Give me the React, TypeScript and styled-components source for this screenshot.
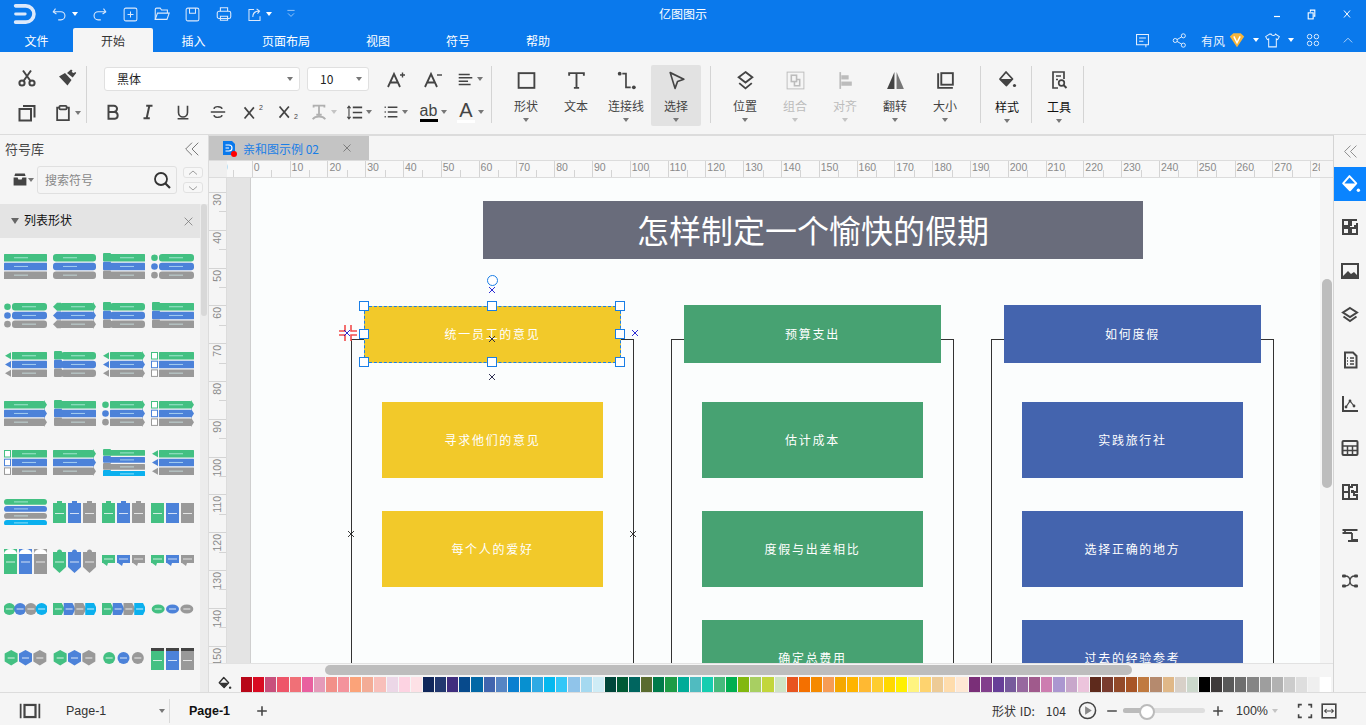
import React from 'react';
import styled, { createGlobalStyle } from 'styled-components';

const FONT = `"Noto Sans CJK SC", "Liberation Sans", sans-serif`;
const BLUE = '#0a79ec';

const GlobalStyle = createGlobalStyle`
  html, body {
    margin: 0;
    padding: 0;
    overflow: hidden;
    background: #f5f5f5;
  }
  * {
    box-sizing: border-box;
  }
`;

const Shell = styled.div`
  width: 1366px;
  height: 725px;
  display: flex;
  flex-direction: column;
  overflow: hidden;
  font-family: ${FONT};
  font-size: 12px;
  color: #333;
`;

/* ---------- icons ---------- */

type SvgProps = { $size?: number; $box?: number };

const Svg = styled.svg.attrs<SvgProps>((p) => ({
  viewBox: `0 0 ${p.$box ?? 20} ${p.$box ?? 20}`,
  fill: p.fill ?? 'none',
  stroke: p.stroke ?? 'currentColor',
  strokeWidth: p.strokeWidth ?? 1.6,
}))<SvgProps>`
  width: ${(p) => p.$size ?? 20}px;
  height: ${(p) => p.$size ?? 20}px;
  flex: none;
  display: block;
`;

const Caret = styled.i<{ $light?: boolean; $dim?: boolean }>`
  display: block;
  flex: none;
  width: 0;
  height: 0;
  margin-left: 3px;
  border-left: 3.5px solid transparent;
  border-right: 3.5px solid transparent;
  border-top: 4px solid ${(p) => (p.$light ? '#fff' : p.$dim ? '#c4c4c4' : '#777')};
`;

const Logo = () => (
  <Svg $size={24} strokeWidth={3} strokeLinecap="round">
    <path d="M3 3.2h8.5a6.8 6.8 0 0 1 0 13.6H3" />
    <path d="M3 10h8" strokeWidth={2.4} />
  </Svg>
);

/* ---------- title bar ---------- */

const TitleBar = styled.div`
  height: 28px;
  flex: none;
  background: ${BLUE};
  color: #fff;
  display: flex;
  align-items: center;
  position: relative;
`;

const QuickSlot = styled.div<{ $w: number; $lead?: number }>`
  width: ${(p) => p.$w}px;
  height: 28px;
  padding-left: ${(p) => p.$lead ?? 0}px;
  display: flex;
  align-items: center;
  justify-content: center;
  flex: none;
  color: #dce9fb;
`;

const AppName = styled.div`
  position: absolute;
  left: 0;
  right: 0;
  text-align: center;
  font-size: 12px;
  top: 5px;
  pointer-events: none;
`;

const WindowButtons = styled.div`
  margin-left: auto;
  display: flex;
  padding-right: 2px;
`;

const WindowButton = styled.div`
  width: 35px;
  height: 28px;
  display: flex;
  align-items: center;
  justify-content: center;
  color: #fff;
`;

/* ---------- menu tabs ---------- */

const MenuBar = styled.div`
  height: 24px;
  flex: none;
  background: ${BLUE};
  display: flex;
  align-items: flex-end;
  color: #fff;
`;

const MenuTab = styled.div<{ $w: number; $active?: boolean }>`
  width: ${(p) => p.$w}px;
  height: 24px;
  display: flex;
  align-items: center;
  justify-content: center;
  font-size: 12px;
  flex: none;
  background: ${(p) => (p.$active ? '#f5f5f5' : 'transparent')};
  color: ${(p) => (p.$active ? '#333' : '#fff')};
  border-radius: 2px 2px 0 0;
`;

const MenuTools = styled.div`
  margin-left: auto;
  display: flex;
  align-items: center;
  height: 24px;
`;

const MenuTool = styled.div<{ $w: number }>`
  width: ${(p) => p.$w}px;
  display: flex;
  align-items: center;
  justify-content: center;
  flex: none;
  color: #e8f1fd;
`;

/* ---------- ribbon ---------- */

const Ribbon = styled.div`
  height: 83px;
  flex: none;
  background: #f5f5f5;
  border-bottom: 1px solid #dcdcdc;
  display: flex;
  align-items: flex-start;
  color: #444;
`;

const RibbonDivider = styled.div`
  width: 1px;
  height: 57px;
  margin-top: 14px;
  background: #d4d4d4;
  flex: none;
`;

const ClipGroup = styled.div`
  width: 86px;
  padding: 8px 0 0 7px;
  display: grid;
  grid-template-columns: 40px 40px;
  grid-auto-rows: 35px;
  flex: none;
`;

const RibbonCell = styled.div<{ $w?: number; $gap?: number; $dim?: boolean }>`
  width: ${(p) => (p.$w ? `${p.$w}px` : 'auto')};
  margin-left: ${(p) => p.$gap ?? 0}px;
  height: 100%;
  display: flex;
  align-items: center;
  justify-content: center;
  flex: none;
  color: ${(p) => (p.$dim ? '#b0b0b0' : 'inherit')};
`;

const FontGroup = styled.div`
  width: 404px;
  padding: 15px 0 0 8px;
  flex: none;
  display: flex;
  flex-direction: column;
  gap: 9px;
`;

const FontRow = styled.div<{ $indent?: number }>`
  height: 24px;
  display: flex;
  align-items: center;
  padding-left: ${(p) => p.$indent ?? 0}px;
`;

const Picker = styled.div<{ $w: number; $gap?: number }>`
  width: ${(p) => p.$w}px;
  margin-left: ${(p) => p.$gap ?? 0}px;
  height: 24px;
  background: #fff;
  border: 1px solid #e0e0e0;
  border-radius: 3px;
  display: flex;
  align-items: center;
  justify-content: space-between;
  padding: 0 6px 2px 12px;
  font-size: 12px;
  color: #222;
  flex: none;
  & > i {
    margin-top: 2px;
  }
`;

const BigGroup = styled.div<{ $pad: number; $w: number }>`
  width: ${(p) => p.$w}px;
  padding: 13px 0 0 ${(p) => p.$pad}px;
  display: flex;
  flex: none;
`;

const BigButton = styled.div<{ $active?: boolean; $off?: boolean; $w?: number; $dark?: boolean }>`
  width: ${(p) => p.$w ?? 50}px;
  height: 61px;
  flex: none;
  display: flex;
  flex-direction: column;
  align-items: center;
  background: ${(p) => (p.$active ? '#e2e2e2' : 'transparent')};
  border-radius: 2px;
  color: ${(p) => (p.$off ? '#bcbcbc' : p.$dark ? '#111' : '#444')};
`;

const BigIcon = styled.div<{ $raised?: boolean }>`
  height: 29px;
  margin-top: ${(p) => (p.$raised ? 0 : 1)}px;
  display: flex;
  align-items: center;
  justify-content: center;
  color: ${(p) => (p.$raised ? '#444' : 'inherit')};
`;

const BigLabel = styled.div<{ $low?: boolean }>`
  height: 18px;
  line-height: 18px;
  margin-top: ${(p) => (p.$low ? 4 : 2)}px;
  font-size: 12px;
  white-space: nowrap;
`;

const BigCaret = styled.div`
  margin-top: 3px;
  & > i {
    margin-left: 0;
  }
`;

const SuperScript = styled.span<{ $down?: boolean }>`
  font-family: "Liberation Sans", sans-serif;
  display: flex;
  align-items: ${(p) => (p.$down ? 'flex-end' : 'flex-start')};
  font-size: 16px;
  line-height: 18px;
  color: #444;
  & small {
    font-size: 7px;
    line-height: 8px;
  }
`;

const LetterIcon = styled.span<{ $bar: string; $big?: boolean }>`
  font-family: "Liberation Sans", sans-serif;
  display: flex;
  flex-direction: column;
  align-items: center;
  width: 18px;
  font-size: ${(p) => (p.$big ? 20 : 16)}px;
  line-height: ${(p) => (p.$big ? 17 : 15)}px;
  color: #444;
  &::after {
    content: '';
    width: 18px;
    height: 3px;
    margin-top: 1px;
    background: ${(p) => p.$bar};
  }
`;

/* ---------- main body ---------- */

const Body = styled.div`
  flex: 1;
  min-height: 0;
  display: flex;
`;

const LeftPanel = styled.aside`
  width: 209px;
  flex: none;
  background: #f5f5f5;
  border-right: 1px solid #dcdcdc;
  display: flex;
  flex-direction: column;
  overflow: hidden;
`;

const PanelTitle = styled.div`
  height: 29px;
  flex: none;
  display: flex;
  align-items: center;
  justify-content: space-between;
  padding: 0 7px 2px 5px;
  font-size: 13px;
  color: #444;
`;

const CollapseIcon = styled.span`
  color: #777;
  display: flex;
`;

const SearchRow = styled.div`
  height: 40px;
  flex: none;
  display: flex;
  padding: 2px 0 0 12px;
  align-items: flex-start;
`;

const TrayButton = styled.div`
  width: 25px;
  height: 28px;
  display: flex;
  align-items: center;
  color: #444;
  & > i {
    margin-left: 0;
  }
`;

const SearchBox = styled.div`
  width: 140px;
  height: 28px;
  background: #f5f5f5;
  border: 1px solid #e0e0e0;
  border-radius: 3px;
  display: flex;
  align-items: center;
  justify-content: space-between;
  padding: 0 4px 2px 7px;
  color: #888;
  font-size: 12px;
  & > svg {
    color: #333;
    margin-top: 2px;
  }
`;

const StepColumn = styled.div`
  margin-left: 6px;
  display: flex;
  flex-direction: column;
  gap: 4px;
  padding-top: 1px;
`;

const StepButton = styled.div`
  width: 20px;
  height: 11px;
  background: #f7f7f7;
  border: 1px solid #e2e2e2;
  border-radius: 3px;
  display: flex;
  align-items: center;
  justify-content: center;
  color: #777;
`;

const LibraryBody = styled.div`
  flex: 1;
  min-height: 0;
  display: flex;
`;

const LibraryColumn = styled.div`
  width: 200px;
  flex: none;
  display: flex;
  flex-direction: column;
`;

const LibraryHeader = styled.div`
  height: 34px;
  flex: none;
  background: #e4e4e4;
  display: flex;
  align-items: center;
  padding: 0 6px 3px 11px;
  color: #111;
  font-size: 12px;
  & > span {
    margin-left: 5px;
    flex: 1;
  }
  & > svg {
    color: #777;
    margin-top: 3px;
  }
  & > i {
    margin-top: 3px;
  }
`;

const LibTriangle = styled.i`
  width: 0;
  height: 0;
  border-left: 4.5px solid transparent;
  border-right: 4.5px solid transparent;
  border-top: 6px solid #666;
`;

const ThumbGrid = styled.div`
  padding: 14px 0 0 4px;
  display: grid;
  grid-template-columns: repeat(4, 43px);
  grid-auto-rows: 28px;
  column-gap: 6px;
  row-gap: 21px;
`;

const LibraryScroll = styled.div`
  width: 8px;
  flex: none;
  background: #ececec;
  padding: 0 1px;
  &::before {
    content: '';
    display: block;
    width: 6px;
    height: 112px;
    background: #d8d8d8;
    border-radius: 3px;
  }
`;

const CenterColumn = styled.main`
  width: 1124px;
  flex: none;
  display: flex;
  flex-direction: column;
  min-width: 0;
`;

const DocTabs = styled.div`
  height: 26px;
  flex: none;
  background: #f5f5f5;
  border-top: 1px solid #dcdcdc;
  border-bottom: 1px solid #dcdcdc;
  display: flex;
`;

const DocTab = styled.div`
  width: 160px;
  height: 24px;
  background: #c4c4c4;
  display: flex;
  align-items: center;
  padding-left: 13px;
  color: #1a7ee6;
  font-size: 12px;
  position: relative;
`;

const DocTabName = styled.span`
  margin-left: 7px;
  width: 99px;
  white-space: nowrap;
`;

const DocTabClose = styled.span`
  color: #666;
  display: flex;
`;

const RedDot = styled.i`
  position: absolute;
  left: 22px;
  top: 15px;
  width: 6px;
  height: 6px;
  border-radius: 50%;
  background: #f00;
`;

const RulerRow = styled.div`
  height: 17px;
  flex: none;
  display: flex;
  background: #f5f5f5;
  border-bottom: 1px solid #dcdcdc;
`;

const RulerCorner = styled.div`
  width: 18px;
  flex: none;
  background: #efefef;
`;

const HStrip = styled.div`
  width: 1093px;
  flex: none;
  overflow: hidden;
  display: flex;
  background: #f8f8f8;
`;

const HTick = styled.div<{ $first?: boolean }>`
  width: 37.8px;
  flex: none;
  margin-left: ${(p) => (p.$first ? -13 : 0)}px;
  height: 16px;
  border-left: 1px solid #d4d4d4;
  position: relative;
  padding-left: 1px;
  font: 10.5px/13px "Liberation Sans", sans-serif;
  color: #8a8a8a;
  &::after {
    content: '';
    position: absolute;
    left: 18.4px;
    bottom: 0;
    height: 7px;
    width: 1px;
    background: #d4d4d4;
  }
`;

const CanvasRow = styled.div`
  height: 485px;
  flex: none;
  display: flex;
`;

const VRuler = styled.div`
  width: 18px;
  flex: none;
  overflow: hidden;
  background: #f5f5f5;
  border-right: 1px solid #dcdcdc;
  padding-top: 14px;
`;

const VTick = styled.div`
  height: 37.8px;
  border-top: 1px solid #d4d4d4;
  position: relative;
  font: 10.5px/13px "Liberation Sans", sans-serif;
  color: #8a8a8a;
  & > span {
    position: absolute;
    left: 2px;
    top: 1px;
    writing-mode: vertical-rl;
    transform: rotate(180deg);
  }
  &::after {
    content: '';
    position: absolute;
    right: 0;
    top: 18.4px;
    width: 7px;
    height: 1px;
    background: #d4d4d4;
  }
`;

const Viewport = styled.div`
  width: 1093px;
  flex: none;
  overflow: hidden;
  background: #e4e4e4;
  padding-left: 24px;
`;

const Page = styled.div`
  width: 1069px;
  height: 640px;
  background: #fbfdfd;
  box-shadow: -1px 0 0 #cfcfcf;
  position: relative;
`;

const VScrollTrack = styled.div`
  width: 13px;
  flex: none;
  background: #f5f5f5;
  padding: 101px 1px 0 2px;
  &::before {
    content: '';
    display: block;
    height: 209px;
    background: #bdbdbd;
    border-radius: 5px;
  }
`;

const HScrollRow = styled.div`
  height: 12px;
  flex: none;
  display: flex;
  background: #f5f5f5;
  padding-left: 116px;
  padding-right: 13px;
  border-top: 1px solid #e2e2e2;
`;

const HScrollThumb = styled.div`
  width: 807px;
  height: 10px;
  margin-top: 1px;
  background: #bdbdbd;
  border-radius: 5px;
`;

const ColorRow = styled.div`
  height: 17px;
  flex: none;
  display: flex;
  align-items: flex-start;
  background: #f5f5f5;
  padding-left: 32px;
  position: relative;
`;

const PaintSlot = styled.div`
  position: absolute;
  left: 8px;
  top: 1px;
  color: #333;
`;

const Swatch = styled.div<{ $c: string }>`
  width: 11.13px;
  margin-right: 1px;
  height: 15px;
  margin-top: 2px;
  flex: none;
  background: ${(p) => p.$c};
`;

const RightPanel = styled.aside`
  flex: 1;
  background: #f5f5f5;
  border-left: 1px solid #d4d4d4;
  display: flex;
  flex-direction: column;
  align-items: stretch;
  color: #444;
`;

const RailCollapse = styled.div`
  height: 32px;
  display: flex;
  align-items: center;
  justify-content: center;
  color: #888;
`;

const RailItem = styled.div<{ $active?: boolean }>`
  height: ${(p) => (p.$active ? 34 : 44.2)}px;
  display: flex;
  align-items: center;
  justify-content: center;
  background: ${(p) => (p.$active ? '#0a84ff' : 'transparent')};
  color: ${(p) => (p.$active ? '#fff' : '#444')};
  margin-bottom: ${(p) => (p.$active ? 4 : 0)}px;
`;

/* ---------- diagram ---------- */

const TitleNode = styled.div`
  position: absolute;
  left: 232px;
  top: 23px;
  width: 660px;
  height: 58px;
  padding-bottom: 2px;
  background: #696c7b;
  color: #fff;
  font-size: 32px;
  display: flex;
  align-items: center;
  justify-content: center;
`;

const Frame = styled.div<{ $x: number }>`
  position: absolute;
  left: ${(p) => p.$x}px;
  top: 161px;
  width: 283px;
  height: 480px;
  border: 1px solid #333;
  border-bottom: none;
`;

const Box = styled.div<{ $x: number; $y: number; $w: number; $h: number; $c: string }>`
  position: absolute;
  left: ${(p) => p.$x}px;
  top: ${(p) => p.$y}px;
  width: ${(p) => p.$w}px;
  height: ${(p) => p.$h}px;
  padding-bottom: 2px;
  background: ${(p) => p.$c};
  color: #fff;
  font-size: 12px;
  letter-spacing: 1.7px;
  display: flex;
  align-items: center;
  justify-content: center;
`;

const SelectionOutline = styled.div`
  position: absolute;
  left: 113px;
  top: 128px;
  width: 257px;
  height: 57px;
  border: 1px dashed #1a7ee6;
`;

const Handle = styled.div<{ $x: number; $y: number }>`
  position: absolute;
  left: ${(p) => p.$x - 5}px;
  top: ${(p) => p.$y - 5}px;
  width: 10px;
  height: 10px;
  background: #fff;
  border: 1px solid #1a7ee6;
`;

const RotateHandle = styled.div`
  position: absolute;
  left: 236px;
  top: 97px;
  width: 11px;
  height: 11px;
  border-radius: 50%;
  border: 1px solid #1a7ee6;
  background: #fff;
`;

const CrossMark = styled.svg.attrs({ viewBox: '0 0 8 8' })<{ $x: number; $y: number; $c: string }>`
  position: absolute;
  left: ${(p) => p.$x - 4}px;
  top: ${(p) => p.$y - 4}px;
  width: 8px;
  height: 8px;
  stroke: ${(p) => p.$c};
  stroke-width: 0.9;
  fill: none;
`;

const Snap = styled.svg.attrs({ viewBox: '0 0 18 18' })`
  position: absolute;
  left: 88px;
  top: 146px;
  width: 18px;
  height: 18px;
  fill: none;
  stroke: #f24b4b;
  stroke-width: 1.6;
`;

/* ---------- status bar ---------- */

const StatusBar = styled.footer`
  height: 33px;
  flex: none;
  background: #f5f5f5;
  border-top: 1px solid #dcdcdc;
  padding-top: 3px;
  display: flex;
  align-items: center;
  color: #333;
  font-size: 12px;
`;

const ViewToggle = styled.div`
  width: 66px;
  padding-left: 19px;
  flex: none;
  color: #444;
`;

const PagePicker = styled.div`
  width: 104px;
  height: 24px;
  flex: none;
  display: flex;
  align-items: center;
  justify-content: space-between;
  padding-right: 4px;
  border-right: 1px solid #d8d8d8;
  font-family: "Liberation Sans", sans-serif;
  font-size: 12.5px;
`;

const PageTabName = styled.div`
  margin-left: 19px;
  width: 67px;
  font: bold 12.5px "Liberation Sans", sans-serif;
  color: #111;
`;

const AddPage = styled.div`
  width: 22px;
  color: #444;
`;

const StatusRight = styled.div`
  margin-left: auto;
  display: flex;
  align-items: center;
  color: #444;
`;

const ShapeId = styled.div`
  width: 86px;
  color: #333;
  white-space: nowrap;
  word-spacing: 1px;
`;

const ZoomMinus = styled.div`
  margin-left: 9px;
  display: flex;
`;

const ZoomPlus = styled.div`
  margin-left: 2px;
  display: flex;
`;

const ZoomTrack = styled.div`
  width: 82px;
  height: 5px;
  background: #dedede;
  border-radius: 3px;
  margin: 0 5px;
  position: relative;
  &::before {
    content: '';
    position: absolute;
    left: 0;
    top: 0;
    height: 5px;
    width: 20px;
    background: #bbb;
    border-radius: 3px;
  }
  &::after {
    content: '';
    position: absolute;
    left: 16px;
    top: -4px;
    width: 12px;
    height: 12px;
    border-radius: 50%;
    background: #fff;
    border: 2px solid #bbb;
  }
`;

const ZoomValue = styled.div`
  margin-left: 12px;
  width: 42px;
  display: flex;
  align-items: center;
  justify-content: space-between;
  white-space: nowrap;
  font: 12.5px "Liberation Sans", sans-serif;
  color: #333;
`;

const StatusIcons = styled.div`
  margin-left: 19px;
  display: flex;
  gap: 8px;
  padding-right: 29px;
`;

/* ---------- symbol thumbnails ---------- */

const GREEN = '#43c082';
const MID = '#4c82d9';
const GRAY = '#999999';
const CYAN = '#0bb0ee';

type Lead = 'none' | 'circle' | 'tag' | 'diamond' | 'square' | 'arrow';
type ThumbSpec =
  | { kind: 'bars'; lead: Lead; round?: boolean; four?: boolean; tail?: boolean }
  | { kind: 'cols'; cap?: 'tag' | 'arc' | 'point' | 'dark'; tall?: boolean }
  | { kind: 'chain'; shape: 'circle' | 'chevron' | 'oval' | 'hex' | 'coin' }
  | { kind: 'speech' };

function Thumb({ spec }: { spec: ThumbSpec }) {
  if (spec.kind === 'bars') {
    const colors = spec.four ? [GREEN, MID, GRAY, CYAN] : [GREEN, MID, GRAY];
    const pitch = spec.four ? 7 : 8.7;
    const hasLead = spec.lead !== 'none';
    const left = hasLead ? 8 : 0;
    return (
      <svg viewBox="0 0 43 28" width={43} height={28}>
        {colors.map((c, i) => {
          const y = 2 + i * pitch;
          const h = pitch - 1.2;
          return (
            <g key={c}>
              <rect x={left} y={y} width={43 - left - (spec.tail ? 3 : 0)} height={h} rx={spec.round ? 3 : 0.5} fill={c} />
              {spec.tail && <path d={`M40 ${y - 1}l3 ${h / 2 + 1}l-3 ${h / 2 + 1}z`} fill={c} />}
              <rect x={left + 10} y={y + h / 2 - 0.5} width={14} height={1} fill="#dff" opacity={0.6} />
              {spec.lead === 'circle' && <circle cx={3.5} cy={y + h / 2} r={3.3} fill={c} />}
              {spec.lead === 'tag' && <rect x={1} y={y - 1} width={8} height={h + 1} rx={1} fill={c} />}
              {spec.lead === 'diamond' && <path d={`M0 ${y + h / 2}l4 -4h4v8h-4z`} fill={c} />}
              {spec.lead === 'square' && <rect x={0.5} y={y + 0.5} width={6} height={h - 1} fill="#fff" stroke={c} />}
              {spec.lead === 'arrow' && <path d={`M1 ${y + h / 2}l6 -3.5v7z`} fill={c} />}
            </g>
          );
        })}
      </svg>
    );
  }
  if (spec.kind === 'cols') {
    const top = spec.tall ? 3 : 6;
    const bottom = spec.tall ? 28 : 26;
    return (
      <svg viewBox="0 0 43 28" width={43} height={28}>
        {[GREEN, MID, GRAY].map((c, i) => {
          const x = i * 15;
          return (
            <g key={c}>
              {spec.cap === 'point' ? (
                <path d={`M${x} ${top + 3}h13v${bottom - top - 10}l-6.5 6l-6.5 -6z`} fill={c} />
              ) : (
                <rect x={x} y={top} width={13} height={bottom - top} fill={c} />
              )}
              {spec.cap === 'tag' && <rect x={x + 4} y={top - 2} width={5} height={3} fill={c} />}
              {spec.cap === 'point' && <circle cx={x + 6.5} cy={top + 3} r={2.5} fill={c} />}
              {spec.cap === 'arc' && <path d={`M${x} ${top + 5}a6.5 5 0 0 1 13 0z`} fill="#fff" />}
              {spec.cap === 'dark' && <rect x={x} y={top - 2} width={13} height={3} fill="#444" />}
              <rect x={x + 2} y={(top + bottom) / 2} width={9} height={1} fill="#fff" opacity={0.75} />
            </g>
          );
        })}
      </svg>
    );
  }
  if (spec.kind === 'speech') {
    return (
      <svg viewBox="0 0 43 28" width={43} height={28}>
        {[GREEN, MID, GRAY].map((c, i) => (
          <g key={c}>
            <rect x={i * 15} y={9} width={13} height={8} fill={c} />
            <path d={`M${i * 15 + 1} 17h5l-1 3z`} fill={c} />
            <rect x={i * 15 + 2} y={12.5} width={9} height={1} fill="#fff" opacity={0.7} />
          </g>
        ))}
      </svg>
    );
  }
  const items = spec.shape === 'circle' || spec.shape === 'chevron' ? [GREEN, MID, GRAY, CYAN] : [GREEN, MID, GRAY];
  const step = 43 / items.length;
  return (
    <svg viewBox="0 0 43 28" width={43} height={28}>
      {items.map((c, i) => {
        const x = i * step;
        const cx = x + step / 2;
        return (
          <g key={c}>
            {spec.shape === 'circle' && <circle cx={cx} cy={14} r={6} fill={c} />}
            {spec.shape === 'chevron' && <path d={`M${x} 8h${step - 2}l3 6l-3 6h-${step - 2}z`} fill={c} />}
            {spec.shape === 'oval' && <ellipse cx={cx} cy={14} rx={6.5} ry={4.5} fill={c} />}
            {spec.shape === 'hex' && <path d={`M${cx} 6l6.5 3.5v8l-6.5 4l-6.5 -4v-8z`} fill={c} />}
            {spec.shape === 'coin' && <circle cx={cx} cy={14} r={6} fill={c} />}
            <rect x={cx - 3.5} y={13.5} width={7} height={1} fill="#fff" opacity={0.8} />
          </g>
        );
      })}
    </svg>
  );
}

const THUMBS: ThumbSpec[] = [
  { kind: 'bars', lead: 'none' },
  { kind: 'bars', lead: 'none', round: true },
  { kind: 'bars', lead: 'tag' },
  { kind: 'bars', lead: 'circle', round: true },
  { kind: 'bars', lead: 'circle', round: true },
  { kind: 'bars', lead: 'diamond', tail: true },
  { kind: 'bars', lead: 'tag', round: true },
  { kind: 'bars', lead: 'tag' },
  { kind: 'bars', lead: 'arrow' },
  { kind: 'bars', lead: 'tag', round: true },
  { kind: 'bars', lead: 'arrow', tail: true },
  { kind: 'bars', lead: 'square' },
  { kind: 'bars', lead: 'none', tail: true },
  { kind: 'bars', lead: 'tag' },
  { kind: 'bars', lead: 'circle', tail: true },
  { kind: 'bars', lead: 'square', tail: true },
  { kind: 'bars', lead: 'square' },
  { kind: 'bars', lead: 'none', tail: true },
  { kind: 'bars', lead: 'tag', four: true },
  { kind: 'bars', lead: 'arrow' },
  { kind: 'bars', lead: 'none', four: true, round: true },
  { kind: 'cols', cap: 'tag' },
  { kind: 'cols', cap: 'tag' },
  { kind: 'cols' },
  { kind: 'cols', cap: 'arc', tall: true },
  { kind: 'cols', cap: 'point', tall: true },
  { kind: 'speech' },
  { kind: 'speech' },
  { kind: 'chain', shape: 'circle' },
  { kind: 'chain', shape: 'chevron' },
  { kind: 'chain', shape: 'chevron' },
  { kind: 'chain', shape: 'oval' },
  { kind: 'chain', shape: 'hex' },
  { kind: 'chain', shape: 'hex' },
  { kind: 'chain', shape: 'coin' },
  { kind: 'cols', cap: 'dark' },
];

const SWATCHES = [
  '#b80718', '#d90b22', '#c8507c', '#ee5569', '#f07077', '#e9609f', '#e59ab9', '#f29089', '#f4939c', '#fba379',
  '#f3ac96', '#f8bfba', '#ecd7e7', '#fdd3e2', '#fde1e6', '#10265a', '#22386f', '#402d7e', '#074a8c', '#0268a6',
  '#4165ae', '#5685c4', '#0a80d0', '#0790d0', '#2faae4', '#04b8ef', '#33c7f8', '#90c4ea', '#a5d9f0', '#cfecf6',
  '#00463a', '#005a35', '#00655f', '#5a6b2f', '#007a4a', '#1e9b45', '#00ac98', '#50bbc0', '#16cdb0', '#46ba7c',
  '#00af50', '#82b810', '#a8cf62', '#c2d63c', '#cfe4c4', '#e85420', '#f47000', '#f58a00', '#f69c55', '#f5a800',
  '#ffb400', '#ffb932', '#fecd2f', '#ffd800', '#fff000', '#fff480', '#fed36f', '#edcb96', '#fedcac', '#fee8d4',
  '#7a2f78', '#823f8c', '#673f98', '#775a9c', '#97689f', '#a05a8c', '#cd7db0', '#ab97d0', '#c8a7cb', '#ecc4dc',
  '#5e2a1c', '#7a3c2f', '#934a2a', '#a85526', '#c07a40', '#b58a6e', '#e0b888', '#d8d0c8', '#ccd8cc', '#000000',
  '#3e3a3a', '#595959', '#6e6e6e', '#858585', '#9e9e9e', '#b2b2b2', '#cccccc', '#dedede', '#efefef', '#ffffff',
];

const H_TICKS = Array.from({ length: 30 }, (_, i) => i * 10 - 10);
const V_TICKS = Array.from({ length: 13 }, (_, i) => 30 + i * 10);

const YELLOW = '#f2c92a';
const SEA = '#47a272';
const NAVY = '#4464ae';

const COLUMNS = [
  { frame: 100, color: YELLOW, left: 131, items: ['寻求他们的意见', '每个人的爱好'] },
  { frame: 420, color: SEA, left: 451, items: ['估计成本', '度假与出差相比', '确定总费用'] },
  { frame: 740, color: NAVY, left: 771, items: ['实践旅行社', '选择正确的地方', '过去的经验参考'] },
];

const BIG_ONE = [
  {
    label: '形状',
    caret: true,
    icon: <rect x="2.5" y="3" width="15" height="14" strokeWidth="1.8" />,
  },
  {
    label: '文本',
    icon: <path d="M3 5.5V3h14v2.5M10 3v14M7.5 17h5" strokeWidth="1.8" />,
  },
  {
    label: '连接线',
    caret: true,
    icon: (
      <>
        <path d="M6 3.5h3.5v13H14" strokeWidth="1.6" />
        <circle cx="3.5" cy="3.5" r="1.8" fill="currentColor" stroke="none" />
        <circle cx="17" cy="16.5" r="1.8" fill="currentColor" stroke="none" />
      </>
    ),
  },
  {
    label: '选择',
    caret: true,
    active: true,
    icon: <path d="M4 2.5l13 6.3-6 2.2-2.4 6.5z" strokeWidth="1.6" strokeLinejoin="round" />,
  },
];

const BIG_TWO = [
  {
    label: '位置',
    icon: (
      <>
        <path d="M10 2l6.5 5-6.5 5-6.5-5z" strokeWidth="1.8" />
        <path d="M4 12.5l6 5 6-5" strokeWidth="1.8" />
      </>
    ),
  },
  {
    label: '组合',
    off: true,
    icon: (
      <>
        <rect x="2" y="2" width="16" height="16" strokeWidth="0.9" />
        <rect x="6" y="5" width="5" height="6" strokeWidth="1.5" />
        <path d="M11 9h3v6h-5v-4" strokeWidth="1.5" />
      </>
    ),
  },
  {
    label: '对齐',
    off: true,
    icon: (
      <>
        <path d="M5 2v16" strokeWidth="1.6" />
        <rect x="6" y="5" width="7" height="4" fill="currentColor" stroke="none" />
        <rect x="6" y="11" width="10" height="4" fill="currentColor" stroke="none" />
      </>
    ),
  },
  {
    label: '翻转',
    icon: (
      <>
        <path d="M9 2v16H2z" fill="#444" stroke="none" />
        <path d="M11 2v16h7z" fill="#777" stroke="none" />
      </>
    ),
  },
  {
    label: '大小',
    icon: (
      <>
        <rect x="6" y="3" width="11" height="11" strokeWidth="1.8" />
        <path d="M3 3v14h14" strokeWidth="1.8" />
      </>
    ),
  },
];

const RAIL = [
  <>
    <rect x="3" y="3" width="6" height="6" />
    <rect x="3" y="11" width="6" height="6" />
    <rect x="11" y="11" width="6" height="6" />
    <path d="M11 9V3h6M17 6v3h-3" />
  </>,
  <>
    <rect x="2" y="3" width="16" height="14" />
    <path d="M3 15l5-5 3 3 3-2 3 3v3H3z" fill="currentColor" stroke="none" />
  </>,
  <>
    <path d="M10 3l7 4.5-7 4.5-7-4.5z" />
    <path d="M3.5 11.5L10 16l6.5-4.5" />
  </>,
  <>
    <path d="M5 2.5h8l3.5 3.5v11.5h-11.5z" />
    <path d="M7 8h1M10 8h4M7 11h1M10 11h4M7 14h1M10 14h4" strokeWidth="1.5" />
  </>,
  <>
    <path d="M3 2v15h15" />
    <path d="M6 13l4-6 4 5" strokeWidth="1.2" />
    <circle cx="6" cy="13" r="1.4" fill="currentColor" stroke="none" />
    <circle cx="10" cy="7" r="1.4" fill="currentColor" stroke="none" />
    <circle cx="14" cy="12" r="1.4" fill="currentColor" stroke="none" />
  </>,
  <>
    <rect x="2.5" y="3" width="15" height="14" rx="1" />
    <path d="M2.5 8h15M2.5 12.5h15M7.5 8v9M12.5 8v9" strokeWidth="1.5" />
  </>,
  <>
    <path d="M3 3h6v2h3V3h5v7h-3v3h3v4H3z" />
    <path d="M9 3v14M3 10h6" />
    <rect x="11" y="8" width="3" height="3" fill="currentColor" stroke="none" />
  </>,
  <>
    <path d="M2.5 4h15M5 4v3M2.5 7H12" strokeWidth="1.8" />
    <path d="M12 7v7h6M8 15h10" strokeWidth="1.8" />
  </>,
  <>
    <path d="M5 5c4 0 5 3 5 5s1 5 5 5M15 5c-4 0-5 3-5 5s-1 5-5 5" strokeWidth="1.3" />
    <rect x="2" y="3.5" width="4" height="3" rx="1" fill="currentColor" stroke="none" />
    <rect x="14" y="3.5" width="4" height="3" rx="1" fill="currentColor" stroke="none" />
    <rect x="2" y="13.5" width="4" height="3" rx="1" fill="currentColor" stroke="none" />
    <rect x="14" y="13.5" width="4" height="3" rx="1" fill="currentColor" stroke="none" />
  </>,
];

const Bucket = ({ size = 20 }: { size?: number }) => (
  <Svg $size={size} strokeWidth={1.8}>
    <path d="M9 2l6.5 7-6 6.5L3 9z" strokeLinejoin="round" />
    <path d="M3.5 9h12L9.5 15.5z" fill="currentColor" stroke="none" />
    <circle cx="17.5" cy="15.5" r="1.6" fill="currentColor" stroke="none" />
  </Svg>
);

const CrossPath = () => <path d="M1 1l6 6M7 1L1 7" />;

export default function App() {
  return (
    <Shell>
      <GlobalStyle />

      <TitleBar>
        <AppName>亿图图示</AppName>
        <QuickSlot $w={48}>
          <Logo />
        </QuickSlot>
        <QuickSlot $w={32}>
          <Svg $size={18} strokeWidth={1.2}>
            <path d="M5 4L2.5 7.5 6 10" />
            <path d="M3 7.5h8a4.5 4.5 0 0 1 0 9H8" />
          </Svg>
          <Caret $light />
        </QuickSlot>
        <QuickSlot $w={35} $lead={3}>
          <Svg $size={18} strokeWidth={1.2}>
            <path d="M15 4l2.5 3.5L14 10" />
            <path d="M17 7.5H9a4.5 4.5 0 0 0 0 9h3" />
          </Svg>
        </QuickSlot>
        <QuickSlot $w={31}>
          <Svg $size={17} strokeWidth={1.2}>
            <rect x="2.5" y="2.5" width="15" height="15" rx="2" />
            <path d="M10 6.5v7M6.5 10h7" />
          </Svg>
        </QuickSlot>
        <QuickSlot $w={31}>
          <Svg $size={18} strokeWidth={1.2}>
            <path d="M2.5 16V5a1.5 1.5 0 0 1 1.5-1.5h4l1.5 2h6.5V9" />
            <path d="M2.5 16l2.5-7h13l-2.5 7z" />
          </Svg>
        </QuickSlot>
        <QuickSlot $w={31}>
          <Svg $size={17} strokeWidth={1.2}>
            <rect x="2.5" y="2.5" width="15" height="15" rx="2" />
            <path d="M6.5 2.5v6h7v-6" />
          </Svg>
        </QuickSlot>
        <QuickSlot $w={31}>
          <Svg $size={18} strokeWidth={1.2}>
            <rect x="2.5" y="7" width="15" height="8" rx="2" />
            <path d="M6 7V3h8v4M6 12.5h8V17H6z" />
          </Svg>
        </QuickSlot>
        <QuickSlot $w={40}>
          <Svg $size={17} strokeWidth={1.2}>
            <path d="M16.5 12v5h-13V4h6" />
            <path d="M8 13c0-4 2.5-7 7-7M12.5 3.5L16 6l-2.5 3" />
          </Svg>
          <Caret $light />
        </QuickSlot>
        <QuickSlot $w={24}>
          <Svg $size={12} strokeWidth={1.1}>
            <path d="M4 4h12M5 9l5 5 5-5" />
          </Svg>
        </QuickSlot>
        <WindowButtons>
          <WindowButton>
            <Svg $size={10} strokeWidth={2.4}>
              <path d="M4 15h12" />
            </Svg>
          </WindowButton>
          <WindowButton>
            <Svg $size={11} strokeWidth={2}>
              <rect x="4" y="7" width="9" height="11" />
              <path d="M8 5V2h8v11h-2" />
            </Svg>
          </WindowButton>
          <WindowButton>
            <Svg $size={10} strokeWidth={2}>
              <path d="M4 3l12 14M16 3L4 17" />
            </Svg>
          </WindowButton>
        </WindowButtons>
      </TitleBar>

      <MenuBar>
        <MenuTab $w={73}>文件</MenuTab>
        <MenuTab $w={80} $active>
          开始
        </MenuTab>
        <MenuTab $w={81}>插入</MenuTab>
        <MenuTab $w={104}>页面布局</MenuTab>
        <MenuTab $w={80}>视图</MenuTab>
        <MenuTab $w={80}>符号</MenuTab>
        <MenuTab $w={80}>帮助</MenuTab>
        <MenuTools>
          <MenuTool $w={38}>
            <Svg $size={17} strokeWidth={1.2}>
              <path d="M3 3h14v12H3z" />
              <path d="M6 7h8M6 11h5M14 15v3" />
            </Svg>
          </MenuTool>
          <MenuTool $w={37}>
            <Svg $size={17} strokeWidth={1.1}>
              <circle cx="5" cy="10" r="2.4" />
              <circle cx="14.5" cy="4.5" r="2.4" />
              <circle cx="14.5" cy="15.5" r="2.4" />
              <path d="M7 9l5.4-3.2M7 11l5.4 3.2" />
            </Svg>
          </MenuTool>
          <MenuTool $w={30}>有风</MenuTool>
          <MenuTool $w={18}>
            <Svg $size={18} stroke="none">
              <path d="M2 6l4-3.5h8L18 6l-8 12z" fill="#f6b53c" />
              <path d="M6.5 6l3.5 7 3.5-7" stroke="#fff" strokeWidth="1.6" fill="none" />
            </Svg>
          </MenuTool>
          <MenuTool $w={16}>
            <Caret $light />
          </MenuTool>
          <MenuTool $w={20}>
            <Svg $size={17} strokeWidth={1.2}>
              <path d="M6.5 2.5L2 5.5l2 3.5 1.5-.8V17.5h9V8.2l1.5.8 2-3.5-4.5-3c-.5 2-4.5 2-5 0z" />
            </Svg>
          </MenuTool>
          <MenuTool $w={14}>
            <Caret $light />
          </MenuTool>
          <MenuTool $w={34}>
            <Svg $size={16} strokeWidth={1.2}>
              <rect x="3" y="3" width="5.5" height="5.5" rx="2.5" />
              <rect x="11.5" y="3" width="5.5" height="5.5" rx="2.5" />
              <rect x="3" y="11.5" width="5.5" height="5.5" rx="2.5" />
              <rect x="11.5" y="11.5" width="5.5" height="5.5" rx="2.5" />
            </Svg>
          </MenuTool>
          <MenuTool $w={36}>
            <Svg $size={12} strokeWidth={1.2}>
              <path d="M3 14l7-7 7 7" />
            </Svg>
          </MenuTool>
        </MenuTools>
      </MenuBar>

      <Ribbon>
        <ClipGroup>
          <RibbonCell>
            <Svg $size={20} strokeWidth={2}>
              <circle cx="5" cy="15" r="2.6" />
              <circle cx="15" cy="15" r="2.6" />
              <path d="M6.5 13L14 2.5M13.5 13L6 2.5" />
            </Svg>
          </RibbonCell>
          <RibbonCell>
            <Svg $size={20} stroke="none" fill="currentColor">
              <path d="M2 8.5l6-3.5 6.5 7-4 5.5z" />
              <path d="M10 5l4-3.5 1.5 1-.8 1.5 1.8 1 2-1 .7 1-3.5 4.5z" />
            </Svg>
          </RibbonCell>
          <RibbonCell>
            <Svg $size={20} strokeWidth={2}>
              <rect x="2.5" y="6" width="11.5" height="11.5" />
              <path d="M6 3h11.5v11.5" />
            </Svg>
          </RibbonCell>
          <RibbonCell>
            <Svg $size={18} strokeWidth={2}>
              <path d="M6 4H3.5v14h13V4H14" />
              <rect x="6" y="2" width="8" height="4" rx="1" />
            </Svg>
            <Caret />
          </RibbonCell>
        </ClipGroup>
        <RibbonDivider />

        <FontGroup>
          <FontRow $indent={9}>
            <Picker $w={196}>
              黑体
              <Caret />
            </Picker>
            <Picker $w={62} $gap={7}>
              10
              <Caret />
            </Picker>
            <RibbonCell $w={37} $gap={8}>
              <Svg $size={20} strokeWidth={1.8}>
                <path d="M2 18L8 5l6 13M4.5 13.5h7" />
                <path d="M14 6h5M16.5 3.5v5" strokeWidth="1.4" />
              </Svg>
            </RibbonCell>
            <RibbonCell $w={37}>
              <Svg $size={20} strokeWidth={1.8}>
                <path d="M2 18L8 5l6 13M4.5 13.5h7" />
                <path d="M14 6h5" strokeWidth="1.4" />
              </Svg>
            </RibbonCell>
            <RibbonCell $w={37}>
              <Svg $size={17} strokeWidth={1.8}>
                <path d="M2 4h13M2 8h16M2 12h11M2 16h14" />
              </Svg>
              <Caret />
            </RibbonCell>
          </FontRow>
          <FontRow>
            <RibbonCell $w={35}>
              <Svg $size={18} strokeWidth={2.2}>
                <path d="M5 3h6a3.5 3.5 0 0 1 0 7H5zM5 10h7a3.8 3.8 0 0 1 0 7.5H5z" />
              </Svg>
            </RibbonCell>
            <RibbonCell $w={35}>
              <Svg $size={18} strokeWidth={2.2}>
                <path d="M8 3h7M5 17h7M11.5 3l-3 14" />
              </Svg>
            </RibbonCell>
            <RibbonCell $w={35}>
              <Svg $size={18} strokeWidth={1.8}>
                <path d="M5 3v7.5a5 5 0 0 0 10 0V3M4 17.5h12" />
              </Svg>
            </RibbonCell>
            <RibbonCell $w={35}>
              <Svg $size={18} strokeWidth={1.6}>
                <path d="M14.5 6.5C14 3.5 6 3 5.5 6.5M5.5 13.5c.5 3.5 8.5 3 9 0M2 10h16" />
              </Svg>
            </RibbonCell>
            <RibbonCell $w={35}>
              <SuperScript>
                <Svg $size={17} strokeWidth={2}>
                  <path d="M3 4l11 13M14 4L3 17" />
                </Svg>
                <small>2</small>
              </SuperScript>
            </RibbonCell>
            <RibbonCell $w={35}>
              <SuperScript $down>
                <Svg $size={17} strokeWidth={2}>
                  <path d="M3 3l11 13M14 3L3 16" />
                </Svg>
                <small>2</small>
              </SuperScript>
            </RibbonCell>
            <RibbonCell $w={36} $dim>
              <Svg $size={18} strokeWidth={2}>
                <path d="M4 5V3h12v2M10 3v10M7 13h6M3 18c3-4 11-4 14 0" />
              </Svg>
              <Caret $dim />
            </RibbonCell>
            <RibbonCell $w={36}>
              <Svg $size={17} strokeWidth={1.8}>
                <path d="M3.5 3v14M1.5 5l2-2.5 2 2.5M1.5 15l2 2.5 2-2.5" strokeWidth="1.3" />
                <path d="M8 4h11M8 10h11M8 16h11" strokeWidth="2" />
              </Svg>
              <Caret />
            </RibbonCell>
            <RibbonCell $w={37}>
              <Svg $size={16} strokeWidth={2}>
                <path d="M2 4h1.5M6 4h12M2 10h1.5M6 10h12M2 16h1.5M6 16h12" />
              </Svg>
              <Caret />
            </RibbonCell>
            <RibbonCell $w={38}>
              <LetterIcon $bar="#000">ab</LetterIcon>
              <Caret />
            </RibbonCell>
            <RibbonCell $w={37}>
              <LetterIcon $bar="#fff" $big>
                A
              </LetterIcon>
              <Caret />
            </RibbonCell>
          </FontRow>
        </FontGroup>
        <RibbonDivider />

        <BigGroup $pad={9} $w={218}>
          {BIG_ONE.map((b) => (
            <BigButton key={b.label} $active={b.active}>
              <BigIcon>
                <Svg $size={21}>{b.icon}</Svg>
              </BigIcon>
              <BigLabel>{b.label}</BigLabel>
              {b.caret && (
                <BigCaret>
                  <Caret />
                </BigCaret>
              )}
            </BigButton>
          ))}
        </BigGroup>
        <RibbonDivider />

        <BigGroup $pad={9} $w={269}>
          {BIG_TWO.map((b) => (
            <BigButton key={b.label} $off={b.off}>
              <BigIcon>
                <Svg $size={21}>{b.icon}</Svg>
              </BigIcon>
              <BigLabel>{b.label}</BigLabel>
              <BigCaret>
                <Caret $dim={b.off} />
              </BigCaret>
            </BigButton>
          ))}
        </BigGroup>
        <RibbonDivider />

        <BigGroup $pad={2} $w={50}>
          <BigButton $w={48} $dark>
            <BigIcon $raised>
              <Bucket />
            </BigIcon>
            <BigLabel $low>样式</BigLabel>
            <BigCaret>
              <Caret />
            </BigCaret>
          </BigButton>
        </BigGroup>
        <RibbonDivider />

        <BigGroup $pad={3} $w={51}>
          <BigButton $w={48} $dark>
            <BigIcon $raised>
              <Svg $size={20} strokeWidth={1.7}>
                <path d="M9 18H4V2h11v7" />
                <path d="M7 6h5M7 9.5h2" />
                <circle cx="12.5" cy="13" r="2.8" />
                <path d="M14.5 15l3 3" strokeWidth="2" />
              </Svg>
            </BigIcon>
            <BigLabel $low>工具</BigLabel>
            <BigCaret>
              <Caret />
            </BigCaret>
          </BigButton>
        </BigGroup>
        <RibbonDivider />
      </Ribbon>

      <Body>
        <LeftPanel>
          <PanelTitle>
            符号库
            <CollapseIcon>
              <Svg $size={18} strokeWidth={1.1}>
                <path d="M10 3L3 10l7 7M17 3l-7 7 7 7" />
              </Svg>
            </CollapseIcon>
          </PanelTitle>
          <SearchRow>
            <TrayButton>
              <Svg $size={16} stroke="none" fill="currentColor">
                <path d="M4 2h12l1 3H3z" />
                <path d="M2 7h5l1 2.5h4L13 7h5v10H2z" />
              </Svg>
              <Caret />
            </TrayButton>
            <SearchBox>
              搜索符号
              <Svg $size={20} strokeWidth={1.8}>
                <circle cx="9" cy="9" r="6" />
                <path d="M13.5 13.5L18 18" strokeWidth="2.2" />
              </Svg>
            </SearchBox>
            <StepColumn>
              <StepButton>
                <Svg $size={10} strokeWidth={1.4}>
                  <path d="M2 13l8-7 8 7" />
                </Svg>
              </StepButton>
              <StepButton>
                <Svg $size={10} strokeWidth={1.4}>
                  <path d="M2 7l8 7 8-7" />
                </Svg>
              </StepButton>
            </StepColumn>
          </SearchRow>
          <LibraryBody>
            <LibraryColumn>
              <LibraryHeader>
                <LibTriangle />
                <span>列表形状</span>
                <Svg $size={11} strokeWidth={1.4}>
                  <path d="M3 3l14 14M17 3L3 17" />
                </Svg>
              </LibraryHeader>
              <ThumbGrid>
                {THUMBS.map((spec, i) => (
                  <Thumb key={i} spec={spec} />
                ))}
              </ThumbGrid>
            </LibraryColumn>
            <LibraryScroll />
          </LibraryBody>
        </LeftPanel>

        <CenterColumn>
          <DocTabs>
            <DocTab>
              <Svg $size={14} $box={14} stroke="none">
                <path d="M1 0h9l3 3v11H1z" fill="#0a79ec" />
                <path d="M3.5 4h3.5a3 3 0 0 1 0 6H3.5M3.5 7h3.5" stroke="#fff" strokeWidth="1.2" fill="none" />
              </Svg>
              <RedDot />
              <DocTabName>亲和图示例 02</DocTabName>
              <DocTabClose>
                <Svg $size={10} strokeWidth={1.5}>
                  <path d="M3 3l14 14M17 3L3 17" />
                </Svg>
              </DocTabClose>
            </DocTab>
          </DocTabs>

          <RulerRow>
            <RulerCorner />
            <HStrip>
              {H_TICKS.map((n, i) => (
                <HTick key={n} $first={i === 0}>
                  {Math.abs(n)}
                </HTick>
              ))}
            </HStrip>
          </RulerRow>

          <CanvasRow>
            <VRuler>
              {V_TICKS.map((n) => (
                <VTick key={n}>
                  <span>{n}</span>
                </VTick>
              ))}
            </VRuler>
            <Viewport>
              <Page>
                <TitleNode>怎样制定一个愉快的假期</TitleNode>
                {COLUMNS.map((col) => (
                  <React.Fragment key={col.frame}>
                    <Frame $x={col.frame} />
                    {col.items.map((text, i) => (
                      <Box key={text} $x={col.left} $y={224 + i * 109} $w={221} $h={76} $c={col.color}>
                        {text}
                      </Box>
                    ))}
                  </React.Fragment>
                ))}
                <Box $x={113} $y={128} $w={257} $h={57} $c={YELLOW}>
                  统一员工的意见
                </Box>
                <Box $x={433} $y={127} $w={257} $h={58} $c={SEA}>
                  预算支出
                </Box>
                <Box $x={753} $y={127} $w={257} $h={58} $c={NAVY}>
                  如何度假
                </Box>

                <SelectionOutline />
                {[
                  [113, 128],
                  [241, 128],
                  [369, 128],
                  [113, 156],
                  [369, 156],
                  [113, 184],
                  [241, 184],
                  [369, 184],
                ].map(([x, y]) => (
                  <Handle key={`${x}-${y}`} $x={x} $y={y} />
                ))}
                <RotateHandle />
                <Snap>
                  <path d="M6 1v6H0M12 1v6h6M6 17v-6H0M12 17v-6h6" />
                </Snap>
                <CrossMark $x={241} $y={112} $c="#1515d0">
                  <CrossPath />
                </CrossMark>
                <CrossMark $x={241} $y={161} $c="#1a1a40">
                  <CrossPath />
                </CrossMark>
                <CrossMark $x={241} $y={199} $c="#1a1a40">
                  <CrossPath />
                </CrossMark>
                <CrossMark $x={384} $y={155} $c="#1515d0">
                  <CrossPath />
                </CrossMark>
                <CrossMark $x={96} $y={155} $c="#1515d0">
                  <CrossPath />
                </CrossMark>
                <CrossMark $x={100} $y={356} $c="#222">
                  <CrossPath />
                </CrossMark>
                <CrossMark $x={382} $y={356} $c="#222">
                  <CrossPath />
                </CrossMark>
              </Page>
            </Viewport>
            <VScrollTrack />
          </CanvasRow>

          <HScrollRow>
            <HScrollThumb />
          </HScrollRow>

          <ColorRow>
            <PaintSlot>
              <Bucket size={15} />
            </PaintSlot>
            {SWATCHES.map((c, i) => (
              <Swatch key={i} $c={c} />
            ))}
          </ColorRow>
        </CenterColumn>

        <RightPanel>
          <RailCollapse>
            <Svg $size={17} strokeWidth={1.1}>
              <path d="M10 3L3 10l7 7M17 3l-7 7 7 7" />
            </Svg>
          </RailCollapse>
          <RailItem $active>
            <Bucket size={21} />
          </RailItem>
          {RAIL.map((icon, i) => (
            <RailItem key={i}>
              <Svg $size={20} strokeWidth={2}>
                {icon}
              </Svg>
            </RailItem>
          ))}
        </RightPanel>
      </Body>

      <StatusBar>
        <ViewToggle>
          <Svg $size={22} strokeWidth={1.6}>
            <rect x="5" y="4.5" width="10" height="11" strokeWidth="2" />
            <path d="M1.5 3.5v13M18.5 3.5v13" />
          </Svg>
        </ViewToggle>
        <PagePicker>
          Page-1
          <Caret />
        </PagePicker>
        <PageTabName>Page-1</PageTabName>
        <AddPage>
          <Svg $size={12} strokeWidth={2.6}>
            <path d="M10 2v16M2 10h16" />
          </Svg>
        </AddPage>
        <StatusRight>
          <ShapeId>形状 ID:&nbsp;&nbsp;&nbsp;104</ShapeId>
          <Svg $size={19} strokeWidth={1.6}>
            <circle cx="10" cy="10" r="8.5" />
            <path d="M7.5 5.5l7 4.5-7 4.5z" fill="#888" stroke="none" />
          </Svg>
          <ZoomMinus>
            <Svg $size={12} strokeWidth={2.4}>
              <path d="M2 10h16" />
            </Svg>
          </ZoomMinus>
          <ZoomTrack />
          <ZoomPlus>
            <Svg $size={12} strokeWidth={2.4}>
              <path d="M10 2v16M2 10h16" />
            </Svg>
          </ZoomPlus>
          <ZoomValue>
            100%
            <Caret $dim />
          </ZoomValue>
          <StatusIcons>
            <Svg $size={16} strokeWidth={2}>
              <path d="M2 6V2h4M14 2h4v4M18 14v4h-4M6 18H2v-4" />
            </Svg>
            <Svg $size={16} strokeWidth={2}>
              <rect x="1.5" y="1.5" width="17" height="17" />
              <path d="M5 10h10M7 7.5L4.5 10 7 12.5M13 7.5l2.5 2.5-2.5 2.5" strokeWidth="1.3" />
            </Svg>
          </StatusIcons>
        </StatusRight>
      </StatusBar>
    </Shell>
  );
}
